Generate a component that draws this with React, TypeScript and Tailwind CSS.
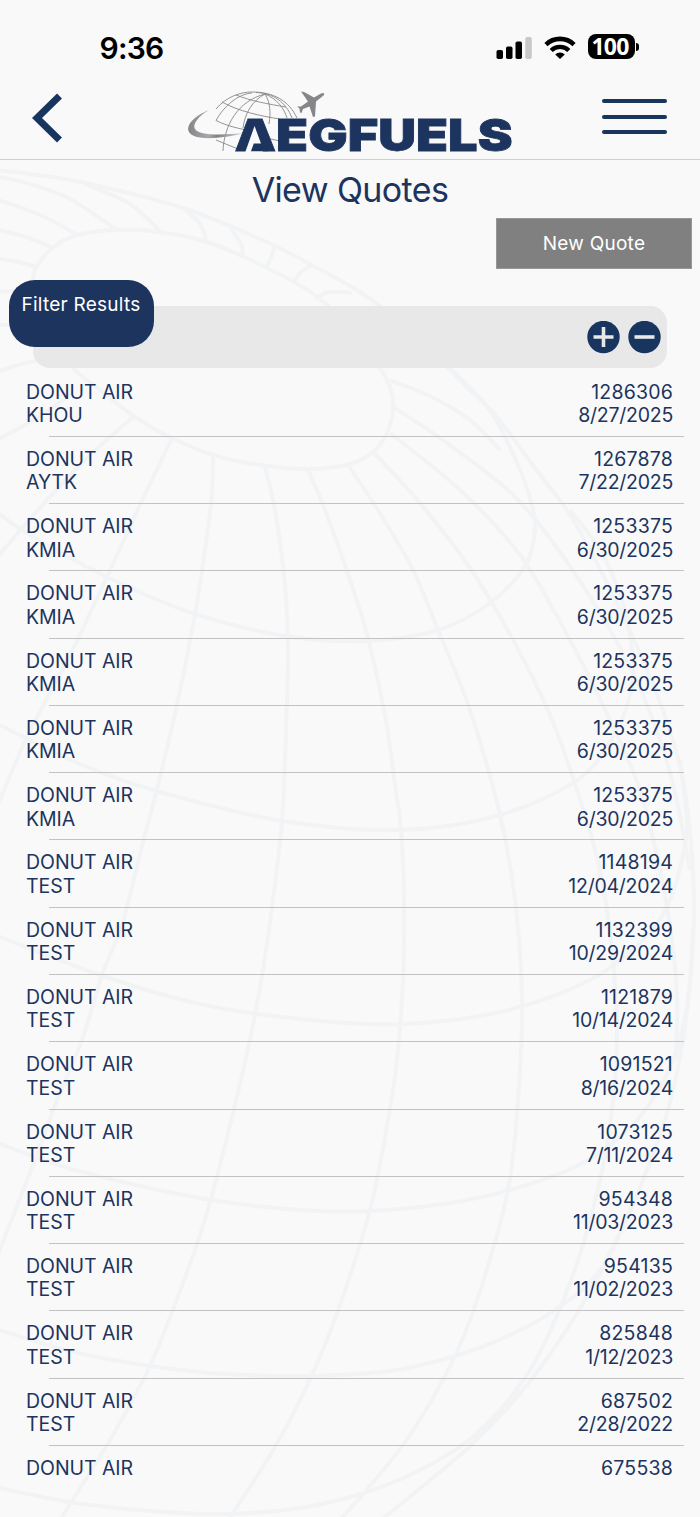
type Quote = { company: string; airport?: string; id: string; date?: string };

const quotes: Quote[] = [
  { company: "DONUT AIR", airport: "KHOU", id: "1286306", date: "8/27/2025" },
  { company: "DONUT AIR", airport: "AYTK", id: "1267878", date: "7/22/2025" },
  { company: "DONUT AIR", airport: "KMIA", id: "1253375", date: "6/30/2025" },
  { company: "DONUT AIR", airport: "KMIA", id: "1253375", date: "6/30/2025" },
  { company: "DONUT AIR", airport: "KMIA", id: "1253375", date: "6/30/2025" },
  { company: "DONUT AIR", airport: "KMIA", id: "1253375", date: "6/30/2025" },
  { company: "DONUT AIR", airport: "KMIA", id: "1253375", date: "6/30/2025" },
  { company: "DONUT AIR", airport: "TEST", id: "1148194", date: "12/04/2024" },
  { company: "DONUT AIR", airport: "TEST", id: "1132399", date: "10/29/2024" },
  { company: "DONUT AIR", airport: "TEST", id: "1121879", date: "10/14/2024" },
  { company: "DONUT AIR", airport: "TEST", id: "1091521", date: "8/16/2024" },
  { company: "DONUT AIR", airport: "TEST", id: "1073125", date: "7/11/2024" },
  { company: "DONUT AIR", airport: "TEST", id: "954348", date: "11/03/2023" },
  { company: "DONUT AIR", airport: "TEST", id: "954135", date: "11/02/2023" },
  { company: "DONUT AIR", airport: "TEST", id: "825848", date: "1/12/2023" },
  { company: "DONUT AIR", airport: "TEST", id: "687502", date: "2/28/2022" },
  { company: "DONUT AIR", id: "675538" },
];

// each entry is one curve of the globe, as x,y pairs
const globeCurves: number[][] = [
  // outline
  [-10, 170, 30, 174, 90, 184, 183, 208, 260, 239, 310, 264, 360, 292, 400, 322, 450, 368, 495, 415, 535, 468, 570, 515, 603, 575, 634, 640, 661, 705, 681, 770, 690, 833, 694, 900, 692, 960, 683, 1040, 668, 1110, 643, 1180, 612, 1250, 576, 1315, 527, 1385, 469, 1447, 375, 1525],
  // parallels
  [33, 300, 35, 270, 55, 246, 78, 235, 115, 230, 160, 232, 210, 243, 265, 267, 315, 295, 355, 333, 380, 368, 391, 390, 393, 412, 386, 435, 372, 453, 350, 464, 310, 469, 260, 465, 213, 455, 170, 437, 135, 417, 100, 390, 73, 368, 45, 330, 33, 300],
  [-10, 506, 22, 530, 107, 577, 195, 614, 285, 636, 366, 641, 438, 630, 490, 603, 525, 566, 535, 530, 530, 498, 518, 465, 493, 415, 467, 387, 425, 345],
  [-10, 720, 80, 764, 160, 792, 283, 821, 400, 830, 500, 815, 580, 778, 617, 730, 632, 685, 632, 650, 622, 600, 600, 550, 570, 510],
  [-10, 933, 100, 975, 200, 1004, 300, 1019, 400, 1024, 500, 1012, 590, 980, 645, 938, 670, 900, 683, 855, 687, 820, 680, 760],
  [-10, 1140, 75, 1170, 200, 1198, 300, 1210, 370, 1211, 450, 1203, 510, 1190, 575, 1167, 620, 1137, 650, 1103, 675, 1055, 688, 1000, 693, 930],
  [-10, 1327, 70, 1351, 150, 1366, 225, 1374, 310, 1376, 390, 1371, 455, 1356, 510, 1335, 555, 1310, 600, 1270, 640, 1190],
  [-10, 1486, 70, 1502, 150, 1511, 225, 1514, 300, 1508, 364, 1493, 420, 1470, 469, 1440, 520, 1390],
  // meridians
  [66, 398, 30, 422, -5, 441],
  [133, 417, 85, 460, 38, 510, -5, 560],
  [172, 438, 140, 505, 107, 577, 70, 655, 28, 735, -5, 812],
  [213, 455, 212, 495, 205, 550, 195, 614, 178, 700, 158, 785, 141, 850, 122, 925, 102, 975, 82, 1040, 55, 1105, 35, 1160, -5, 1262],
  [265, 467, 275, 510, 285, 585, 288, 650, 286, 730, 282, 820, 273, 900, 263, 970, 253, 1025, 235, 1105, 212, 1195, 195, 1250, 172, 1312, 148, 1370, 110, 1440, 60, 1520],
  [308, 470, 325, 510, 350, 580, 368, 638, 385, 715, 395, 785, 401, 830, 404, 900, 403, 980, 397, 1060, 388, 1120, 370, 1210, 340, 1305, 312, 1375, 275, 1447, 225, 1525],
  [348, 465, 378, 510, 413, 570, 438, 630, 470, 710, 500, 815, 515, 900, 522, 1000, 518, 1100, 508, 1190, 482, 1285, 455, 1356, 410, 1435, 364, 1493, 335, 1525],
  [373, 452, 420, 503, 470, 568, 512, 638, 550, 715, 577, 790, 600, 870, 613, 960, 617, 1040, 612, 1110, 600, 1180, 573, 1275, 530, 1370, 469, 1447],
  [390, 433, 460, 490, 520, 555, 570, 640, 610, 720, 640, 790, 660, 870, 672, 940, 677, 1000, 676, 1060],
  [393, 407, 440, 438, 510, 492, 560, 552, 610, 630, 645, 700, 672, 780, 690, 870],
  [389, 380, 430, 396, 470, 420, 500, 450],
  // short meridians above the pole ring
  [38, 267, 18, 262, -5, 258],
  [53, 248, 26, 237, -5, 229],
  [78, 235, 40, 215, -5, 199],
  [117, 230, 70, 199, 30, 184, -5, 176],
  [160, 231, 130, 204, 85, 184],
  [207, 243, 200, 224, 183, 208],
  [243, 257, 241, 244, 231, 229],
  [267, 267, 275, 247],
  [293, 283, 301, 272, 312, 265],
  [315, 298, 330, 292, 352, 293],
  [32, 290, -5, 292],
  [34, 325, -5, 325],
  [38, 360, 15, 366, -5, 373],
];

// Catmull-Rom through the points, written out as cubic beziers
function toPath(p: number[]) {
  const n = p.length / 2;
  const at = (i: number) => {
    const k = Math.max(0, Math.min(n - 1, i));
    return [p[k * 2], p[k * 2 + 1]];
  };
  let d = `M${p[0]} ${p[1]}`;
  for (let i = 0; i < n - 1; i++) {
    const [a, b, c, e] = [at(i - 1), at(i), at(i + 1), at(i + 2)];
    d += `C${b[0] + (c[0] - a[0]) / 6} ${b[1] + (c[1] - a[1]) / 6} ${c[0] - (e[0] - b[0]) / 6} ${c[1] - (e[1] - b[1]) / 6} ${c[0]} ${c[1]}`;
  }
  return d;
}

function GlobeBackground() {
  return (
    <svg
      className="absolute inset-0 pointer-events-none"
      width="700"
      height="1517"
      viewBox="0 0 700 1517"
      fill="none"
      stroke="#f2f3f5"
      strokeWidth="4"
    >
      {globeCurves.map((curve, i) => (
        <path key={i} d={toPath(curve)} />
      ))}
    </svg>
  );
}

function StatusBar() {
  return (
    <div className="flex h-[79px] items-start justify-between pl-[99.5px] pr-[61px] pt-[32px]">
      <span className="text-[30px] leading-[32px] font-semibold tracking-[-0.8px] text-black">
        9:36
      </span>
      <div className="flex items-center gap-3 pt-[2px]">
        <svg width="36" height="24" viewBox="0 0 36 24">
          <rect x="0.5" y="15" width="6.5" height="9" rx="1.8" />
          <rect x="10" y="11.5" width="6.5" height="12.5" rx="1.8" />
          <rect x="19.5" y="6.5" width="6.5" height="17.5" rx="1.8" />
          <rect x="29.3" y="2" width="6.5" height="22" rx="1.8" fill="#c8c8c8" />
        </svg>
        <svg width="32" height="24" viewBox="0 0 32 24" fill="none">
          <path d="M2 9.6a20 20 0 0 1 28 0" stroke="#000" strokeWidth="4.6" />
          <path d="M7.2 15.5a12.6 12.6 0 0 1 17.6 0" stroke="#000" strokeWidth="4.4" />
          <path d="M11.2 19.4a7 7 0 0 1 9.6 0L16 24z" fill="#000" />
        </svg>
        <div className="flex items-center gap-[1px]">
          <div className="flex h-[25px] w-[47px] items-center justify-center rounded-[8px] bg-black pr-[3px] font-['Open_Sans',sans-serif] text-[23px] leading-[25px] font-bold tracking-[-0.8px] text-white">
            100
          </div>
          <div className="h-[8px] w-[3px] rounded-r-full bg-black" />
        </div>
      </div>
    </div>
  );
}

function Logo() {
  return (
    <svg className="overflow-visible" width="330" height="80" viewBox="186 88 330 80">
      <defs>
        <linearGradient id="swoosh" x1="0" x2="1">
          <stop offset="0" stopColor="#858589" />
          <stop offset="0.35" stopColor="#a9a9ac" />
          <stop offset="0.5" stopColor="#808084" />
          <stop offset="1" stopColor="#e0e0e2" />
        </linearGradient>
      </defs>
      <g fill="none" stroke="#88888c" strokeWidth="0.9">
        <path d="M216 109C226 97 240 92 252 92C274 92 289 101 297 118" />
        <path d="M216 120.5C224 106 238 94 252 93" />
        <path d="M223 151C224 125 238 101 265 94" />
        <path d="M243 128C245 113 252 101 265 94" />
        <path d="M265 94C270 102 271 112 269 124" />
        <path d="M265 94C277 99 284 108 287 118" />
        <path d="M256 92.5C273 93 286 102 292 118" />
        <path d="M236 95C251 101 268 104 286 107" />
        <path d="M222 102C238 111 260 116 280 119" />
        <path d="M216 120.5C227 126 240 129 252 131" />
        <path d="M216 140L238 149" />
        <path d="M266 138L280 141" />
      </g>
      <path
        d="M209 110C192 117 186 126 189 132C194 141 220 139 246 133C222 135 199 136 195 129C192 124 199 116 209 110Z"
        fill="url(#swoosh)"
      />
      <path
        d="M301 91.5L304 92L314 97.5L321 93.5C324 92 325 94 323.5 95.5L316 101.5L315 116.5L313 117L309.5 106.5L303 109L301.5 113L300 112.5L299.5 108.5L297 106.5L301 106.5L308 101.5Z"
        fill="#85858a"
      />
      <text
        x="234.5"
        y="150.8"
        fill="#1c345e"
        stroke="#1c345e"
        strokeWidth="0.8"
        fontFamily="Inter, sans-serif"
        fontSize="44.5"
        fontWeight="900"
        textLength="278"
        lengthAdjust="spacingAndGlyphs"
      >
        AEGFUELS
      </text>
      {/* low crossbar with the slanted notch on the first letter */}
      <path d="M248 139H262L268 151.2H249Z" fill="#1c345e" />
      <path d="M254.5 126L261 143.5H253.8L250.7 152H245.3Z" fill="#f9f9f9" />
    </svg>
  );
}

function Header() {
  return (
    <header className="flex h-[81px] items-start border-b border-[#cfcfd1] pl-[32px]">
      <svg className="mt-[14px]" width="31" height="50" viewBox="0 0 31 50">
        <path d="M27.5 3L5 25L27.5 47" fill="none" stroke="#17355f" strokeWidth="7" />
      </svg>
      <div className="ml-[123px] mt-[9px] w-[330px]">
        <Logo />
      </div>
      <div className="ml-[86px] mt-[20px] flex w-[65px] flex-col gap-[11.7px]">
        <div className="h-[4px] rounded-full bg-[#17355f]" />
        <div className="h-[4px] rounded-full bg-[#17355f]" />
        <div className="h-[4px] rounded-full bg-[#17355f]" />
      </div>
    </header>
  );
}

function RoundButton({ plus = false }) {
  return (
    <svg width="33" height="33" viewBox="0 0 33 33">
      <circle cx="16.5" cy="16" r="16.2" fill="#17355f" />
      <path
        d={plus ? "M6.5 16h20M16.5 6v20" : "M6.5 16h20"}
        stroke="#e8e8e8"
        strokeWidth="3.6"
      />
    </svg>
  );
}

function QuoteRow({ quote, last }: { quote: Quote; last: boolean }) {
  return (
    <li className="flex h-[67.27px] flex-col justify-between text-[19.5px] leading-[23.4px] text-[#1c345e]">
      <div className="flex justify-between pl-[26px] pr-[27px] pt-[11px]">
        <div className="tracking-[-0.05px]">
          <p>{quote.company}</p>
          <p>{quote.airport}</p>
        </div>
        <div className="text-right">
          <p className="tracking-[0.2px]">{quote.id}</p>
          <p className="tracking-[-0.25px]">{quote.date}</p>
        </div>
      </div>
      {!last && <div className="ml-[49px] mr-[16px] h-px shrink-0 bg-[#c2c2c5]" />}
    </li>
  );
}

export default function App() {
  return (
    <div className="relative h-[1517px] w-[700px] overflow-hidden bg-[#f9f9f9] font-['Inter',sans-serif]">
      <GlobeBackground />
      <div className="relative">
        <StatusBar />
        <Header />
        <h1 className="h-[58px] pt-[8px] text-center text-[34px] leading-[43px] tracking-[-0.6px] text-[#1c345e]">
          View Quotes
        </h1>
        <div className="flex justify-end pr-[8px]">
          <button className="h-[51px] w-[196px] border border-[#979797] bg-[#808080] pt-[2px] text-[19px] tracking-[0.25px] text-white">
            New Quote
          </button>
        </div>
        <div className="px-[33px] pt-[37px] pb-[1.6px]">
          <div className="relative flex h-[62px] items-center justify-end gap-2 rounded-[17px] bg-[#e8e8e8] pr-[6px]">
            <button className="absolute -left-[24.5px] -top-[26px] flex h-[67px] w-[145px] justify-center rounded-[26px] bg-[#1c345e] pt-[13px] text-[19px] leading-[24px] tracking-[0.25px] whitespace-nowrap text-white">
              Filter Results
            </button>
            <RoundButton plus />
            <RoundButton />
          </div>
        </div>
        <ul>
          {quotes.map((quote, i) => (
            <QuoteRow key={i} quote={quote} last={i === quotes.length - 1} />
          ))}
        </ul>
      </div>
    </div>
  );
}
